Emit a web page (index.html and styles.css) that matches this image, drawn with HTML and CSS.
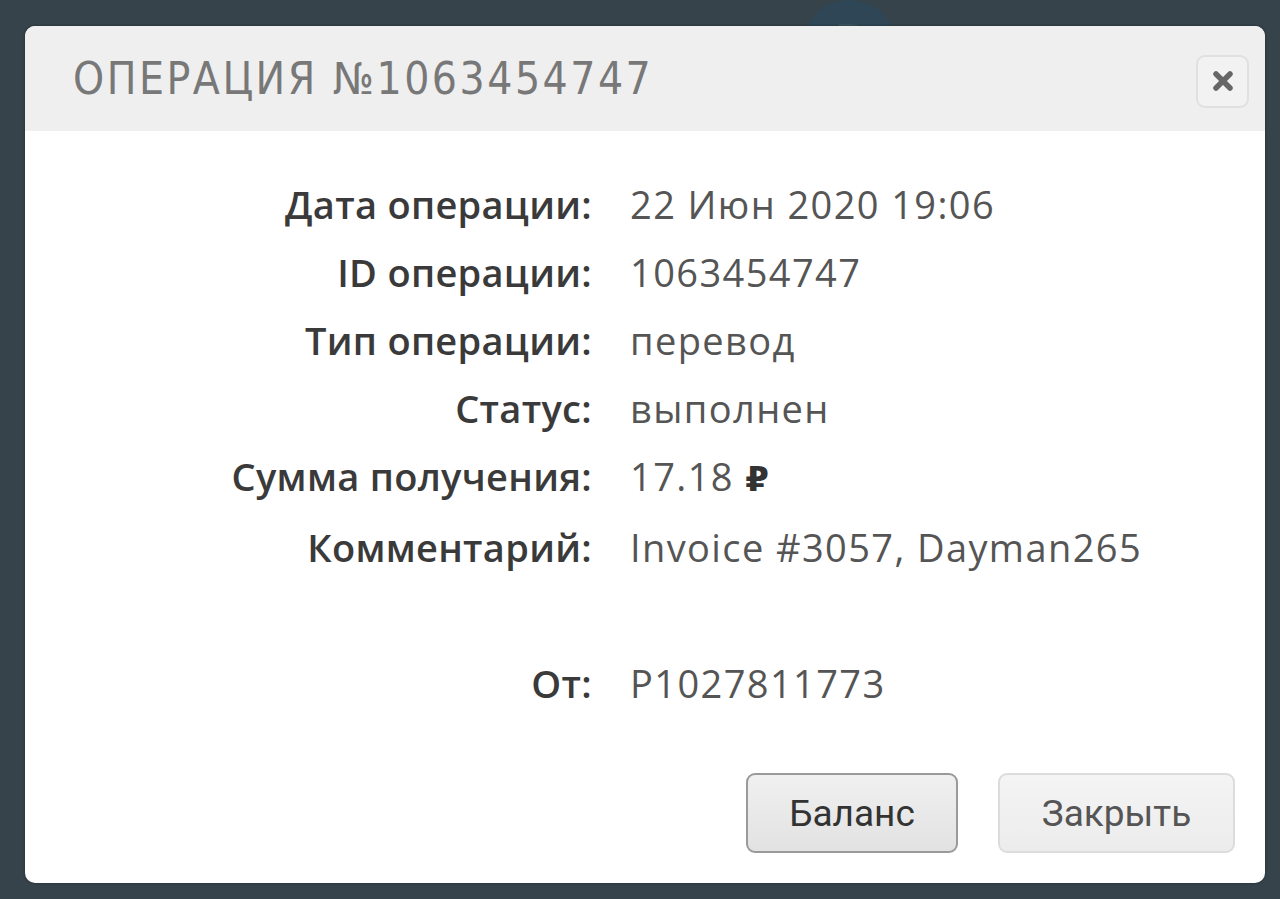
FILE: index.html
```html
<!doctype html>
<html>
<head>
<meta charset="utf-8">
<title>Операция №1063454747</title>
<link rel="stylesheet" href="styles.css">
</head>

<body>
<div class="backdrop">
	<div class="bg-logo">P</div>
</div>
<div class="dialog">
	<div class="dialog-head">
		<h1 class="dialog-title">Операция №1063454747</h1>
		<a class="dialog-close" href="#" title="Закрыть">
			<svg width="24" height="24" viewBox="0 0 24 24"><path d="M5 5 L19 19 M19 5 L5 19" stroke="#666" stroke-width="5.5" stroke-linecap="round"/></svg>
		</a>
	</div>
	<div class="dialog-body">
		<dl class="info">
			<dt>Дата операции:</dt><dd>22 Июн 2020 19:06</dd>
			<dt>ID операции:</dt><dd>1063454747</dd>
			<dt>Тип операции:</dt><dd>перевод</dd>
			<dt>Статус:</dt><dd>выполнен</dd>
			<dt>Сумма получения:</dt><dd>17.18 <span class="rub">₽</span></dd>
			<dt>Комментарий:</dt><dd>Invoice #3057, Dayman265</dd>
			<dt class="empty"></dt><dd class="empty"></dd>
			<dt>От:</dt><dd>P1027811773</dd>
		</dl>
	</div>
	<div class="dialog-foot">
		<button class="btn btn-main">Баланс</button>
		<button class="btn">Закрыть</button>
	</div>
</div>
</body>
</html>
```

FILE: styles.css
```css
*{margin:0; padding:0;}
html,body{height:100%;}
body{background:#36434b; overflow:hidden; font-family:"Open Sans","Noto Sans",sans-serif;}

.backdrop{position:absolute; top:0; left:0; width:100%; height:100%;}
.bg-logo{position:absolute; top:0; left:802px; width:95px; height:95px; border-radius:50%; background:#2e4655; color:#3b5361; font:bold 40px/80px "DejaVu Sans",sans-serif; text-align:center;}

.dialog{position:relative; margin:26px 0 0 25px; width:1240px; height:857px; background:#fff; border-radius:10px; overflow:hidden; display:flex; flex-direction:column; box-shadow:0 0 3px rgba(0,0,0,.4);}

.dialog-head{height:105px; background:#efefef; display:flex; align-items:center; justify-content:space-between; padding:0 16px 0 48px; box-sizing:border-box;}
.dialog-title{font-family:"DejaVu Sans Condensed","DejaVu Sans",sans-serif; font-weight:normal; font-size:44px; letter-spacing:2.5px; text-transform:uppercase; color:#787878;}
.dialog-close{width:53px; height:53px; box-sizing:border-box; border:2px solid #e0e0e0; border-radius:9px; background:#f2f2f2; display:flex; align-items:center; justify-content:center; margin-top:5px;}

.dialog-body{flex:1; padding:39px 0 0 0;}
.info{display:grid; grid-template-columns:567px 1fr; column-gap:38px; font-size:38px; line-height:68px;}
.info dt{text-align:right; color:#3a3a3a; font-weight:600; letter-spacing:0.3px;}
.info dd{color:#555; letter-spacing:1.4px;}
.info .empty{height:68px;}
.rub{font-family:"DejaVu Sans",sans-serif; font-weight:bold; color:#333; font-size:34px; letter-spacing:0;}

.dialog-foot{display:flex; justify-content:flex-end; gap:40px; padding:0 30px 30px 0;}
.btn{height:80px; box-sizing:border-box; border:2px solid #dcdcdc; border-radius:9px; background:linear-gradient(#f4f4f4,#ececec); font-family:Roboto,"Noto Sans",sans-serif; font-size:37px; color:#555; width:237px;}
.btn-main{width:212px; border-color:#9a9a9a; background:linear-gradient(#f0f0f0,#e2e2e2); color:#333;}
```
